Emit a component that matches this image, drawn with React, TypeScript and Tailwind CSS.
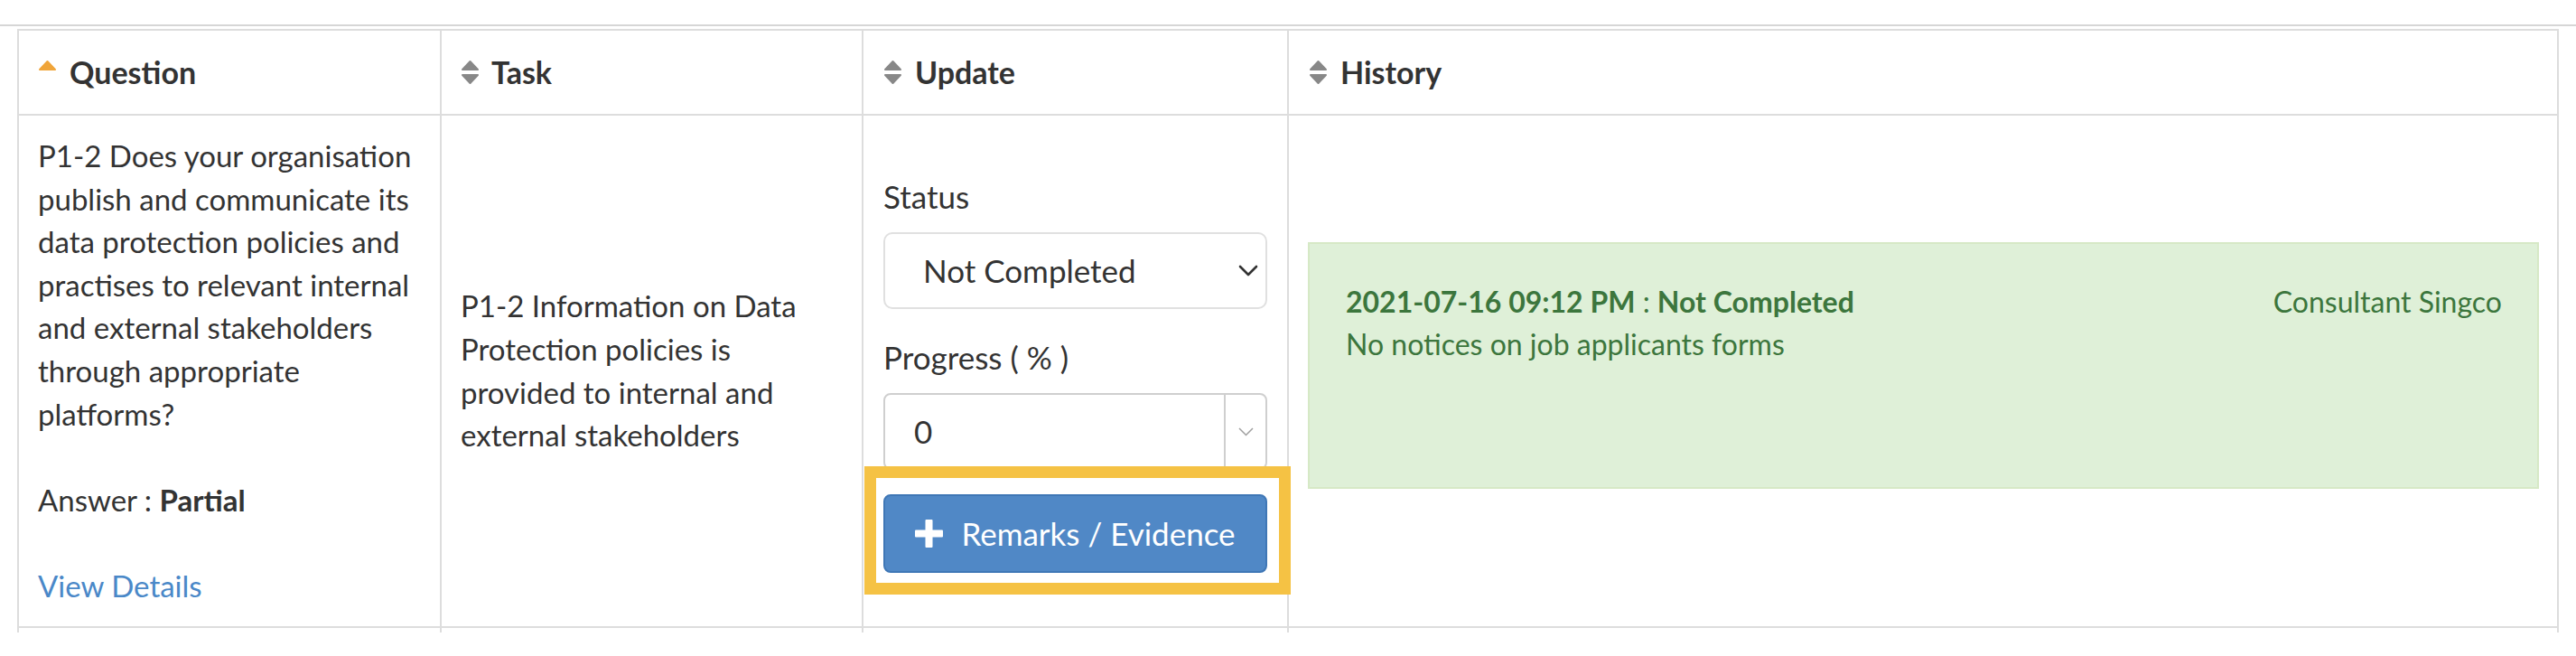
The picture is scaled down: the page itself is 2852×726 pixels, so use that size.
import React from "react";

const Sort = ({ active }: { active?: boolean }) => (
  <svg width="21" height="28" viewBox="0 0 21 28" className="shrink-0">
    {active ? (
      <path d="M10.5 2 L19 11 H2 Z" fill="#f0a53a" stroke="#f0a53a" strokeWidth="2" strokeLinejoin="round" />
    ) : (
      <>
        <path d="M10.5 2 L19 11 H2 Z" fill="#888" stroke="#888" strokeWidth="2" strokeLinejoin="round" />
        <path d="M2 17 H19 L10.5 26 Z" fill="#888" stroke="#888" strokeWidth="2" strokeLinejoin="round" />
      </>
    )}
  </svg>
);

export default function App() {
  return (
    <div className="w-[2852px] h-[726px] bg-white font-[Lato,sans-serif] text-[#333] pt-[27px] overflow-hidden">
      <div className="h-[2px] bg-[#d6d6d6]" />
      <div className="mt-[3px] ml-[19px] w-[2814px] border-2 border-[#dddddd]">
        {/* header */}
        <div className="grid grid-cols-[466px_467px_471px_1406px] h-[94px] border-b-2 border-[#dddddd] text-[34px] font-bold leading-none">
          <div className="flex items-center gap-[14px] pl-[21px]">
            <Sort active />
            <span>Question</span>
          </div>
          <div className="flex items-center gap-[13px] pl-[21px] border-l-2 border-[#dddddd]">
            <Sort />
            <span>Task</span>
          </div>
          <div className="flex items-center gap-[14px] pl-[22px] border-l-2 border-[#dddddd]">
            <Sort />
            <span>Update</span>
          </div>
          <div className="flex items-center gap-[14px] pl-[22px] border-l-2 border-[#dddddd]">
            <Sort />
            <span>History</span>
          </div>
        </div>
        {/* body row */}
        <div className="grid grid-cols-[466px_467px_471px_1406px] h-[565px] text-[33px] leading-[47.6px]">
          <div className="pl-[21px] pt-[21px] whitespace-nowrap">
            P1-2 Does your organisation
            <br />
            publish and communicate its
            <br />
            data protection policies and
            <br />
            practises to relevant internal
            <br />
            and external stakeholders
            <br />
            through appropriate
            <br />
            platforms?
            <br />
            <br />
            Answer : <span className="font-bold">Partial</span>
            <br />
            <br />
            <a className="text-[#4a88c8]">View Details</a>
          </div>
          <div className="flex items-center pl-[21px] border-l-2 border-[#dddddd] whitespace-nowrap">
            <div>
              P1-2 Information on Data
              <br />
              Protection policies is
              <br />
              provided to internal and
              <br />
              external stakeholders
            </div>
          </div>
          <div className="relative flex flex-col pl-[22px] pr-[22px] pt-[66px] border-l-2 border-[#dddddd] text-[35px] leading-[47px]">
            <div className="h-[47px]">Status</div>
            <div className="mt-[16px] h-[85px] flex items-center justify-between border-2 border-[#e0e0e0] rounded-[10px] pl-[42px] pr-[8px]">
              <span>Not Completed</span>
              <svg width="22" height="13" viewBox="0 0 22 13">
                <path d="M2 2 L11 11 L20 2" fill="none" stroke="#333" strokeWidth="2.6" strokeLinecap="round" strokeLinejoin="round" />
              </svg>
            </div>
            <div className="mt-[30px] h-[47px]">Progress ( % )</div>
            <div className="mt-[16px] h-[85px] flex border-2 border-[#cfcfcf] rounded-[8px]">
              <div className="flex-1 flex items-center pl-[32px]">0</div>
              <div className="w-[46px] flex items-center justify-center border-l-2 border-[#cfcfcf]">
                <svg width="17" height="10" viewBox="0 0 17 10">
                  <path d="M1 1 L8.5 8.5 L16 1" fill="none" stroke="#a0a0a0" strokeWidth="1.5" />
                </svg>
              </div>
            </div>
            <div className="mt-[27px] h-[87px] flex items-center justify-center gap-[20px] bg-[#5088c6] border-2 border-[#3f77b6] rounded-[8px] text-white">
              <svg width="31" height="31" viewBox="0 0 31 31">
                <rect x="11.5" y="0" width="8" height="31" rx="1" fill="#fff" />
                <rect x="0" y="11.5" width="31" height="8" rx="1" fill="#fff" />
              </svg>
              <span>Remarks / Evidence</span>
            </div>
            <div className="absolute left-[1px] top-[388px] w-[472px] h-[142px] border-[13px] border-[#f5c244]" />
          </div>
          <div className="pl-[21px] pr-[20px] pt-[140px] border-l-2 border-[#dddddd]">
            <div className="h-[273px] border-2 border-[#d6e9c6] bg-[#dff0d8] text-[#3c763d] text-[32px] leading-[47px] pl-[40px] pr-[39px] pt-[40px]">
              <div className="flex justify-between">
                <span>
                  <span className="font-bold">2021-07-16 09:12 PM</span> : <span className="font-bold">Not Completed</span>
                </span>
                <span>Consultant Singco</span>
              </div>
              <div>No notices on job applicants forms</div>
            </div>
          </div>
        </div>
      </div>
      <div className="ml-[19px] w-[2814px] h-[5px] grid grid-cols-[468px_467px_471px_1408px]">
        <div className="border-l-2 border-[#dddddd]" />
        <div className="border-l-2 border-[#dddddd]" />
        <div className="border-l-2 border-[#dddddd]" />
        <div className="border-l-2 border-r-2 border-[#dddddd]" />
      </div>
    </div>
  );
}
